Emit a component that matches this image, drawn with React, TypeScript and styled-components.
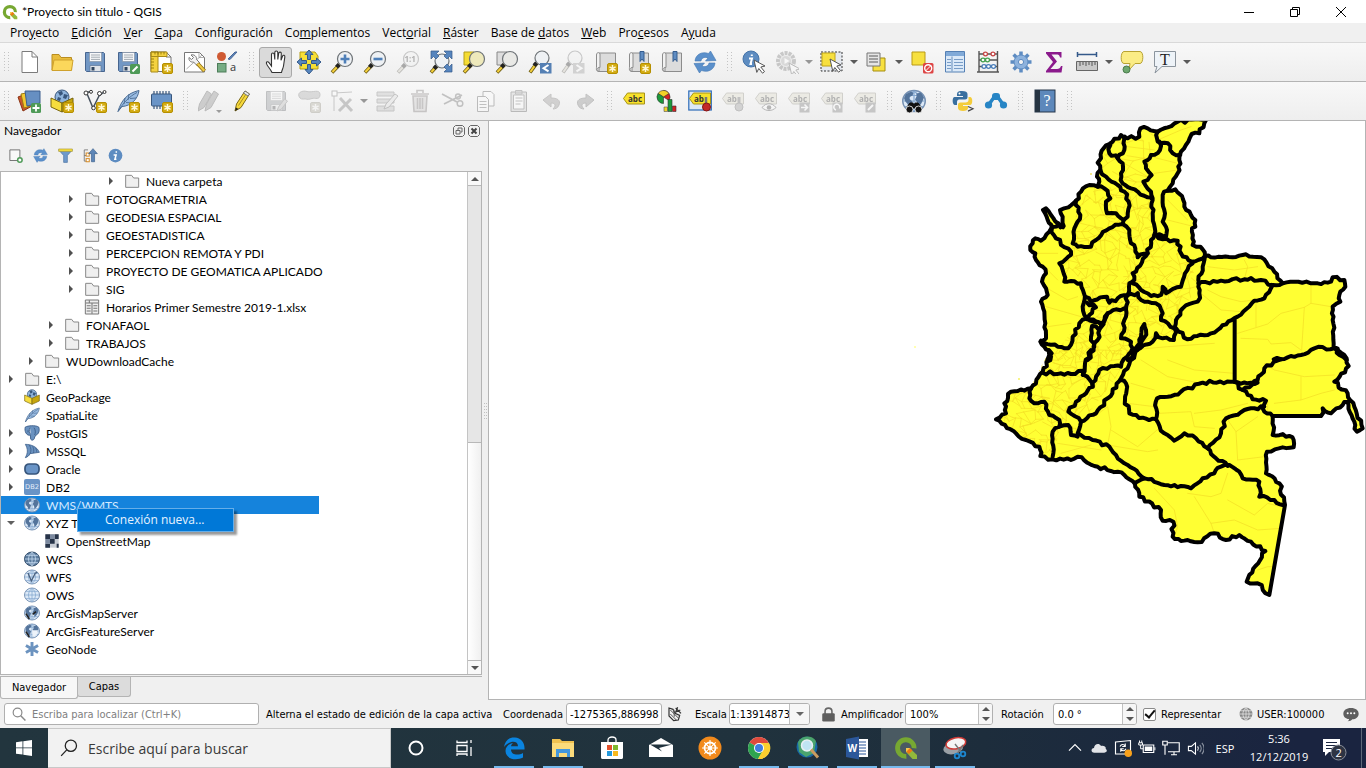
import React from "react";
import styled, { createGlobalStyle } from "styled-components";

const UI = '"Open Sans", "Noto Sans", sans-serif';
const NARROW = 'Lato, "Open Sans", sans-serif';
const COMPACT = '"DejaVu Sans Condensed", "Noto Sans", sans-serif';

const GlobalStyle = createGlobalStyle`
  * { box-sizing: border-box; }
  body { margin: 0; font-family: ${UI}; font-size: 12px; color: #000; background: #f0f0f0; overflow: hidden; }
  button, input { font: inherit; color: inherit; margin: 0; padding: 0; border: 0; background: none; outline: 0; border-radius: 0; }
  svg { display: block; flex: none; }
`;

/* ---------- icon pieces ---------- */

type IconProps = { children: React.ReactNode; size?: number; box?: number };
const Svg = ({ children, size = 24, box = 24 }: IconProps) => (
  <svg width={size} height={size} viewBox={`0 0 ${box} ${box}`} fill="none" aria-hidden="true">{children}</svg>
);

const Star = ({ x = 13, y = 13 }: { x?: number; y?: number }) => (
  <g transform={`translate(${x} ${y})`}>
    <rect x=".5" y=".5" width="10" height="10" rx="1.5" fill="#d3ab12" stroke="#b58f00" />
    <path d="M5.5 2v7M2.4 3.8l6.2 3.5M8.6 3.8L2.4 7.3" stroke="#fff8d8" strokeWidth="1.5" />
  </g>
);

const Lens = ({ cx = 15, cy = 9, r = 7.5, fill = "#eef1f4" }: { cx?: number; cy?: number; r?: number; fill?: string }) => (
  <g>
    <path d={`M2 22.5L${cx - r * 0.72} ${cy + r * 0.72}`} stroke="#6b5a10" strokeWidth="3.6" />
    <path d={`M2.4 22L${cx - r * 0.9} ${cy + r * 0.9}`} stroke="#f4d03c" strokeWidth="2" />
    <path d={`M${cx - r - 1} ${cy + r + 0.6}l2.6-2.6`} stroke="#222" strokeWidth="4" />
    <circle cx={cx} cy={cy} r={r} fill={fill} stroke="#6f7478" strokeWidth="1.2" />
  </g>
);

const Disk = () => (
  <g>
    <path d="M2.500 2.500h18l1 1v18h-18l-1-1z" fill="#7297c4" stroke="#47658f" />
    <path d="M6.500 2.500h12v9h-12z" fill="#f7f8fa" stroke="#7f8b9a" strokeWidth=".6" />
    <path d="M8 5h9M8 7.200h9M8 9.400h9" stroke="#98a1aa" strokeWidth=".9" />
    <path d="M7 15.500h11v6H7z" fill="#dfe3e8" stroke="#5d7697" strokeWidth=".7" />
    <path d="M8.500 17h3v3.500h-3z" fill="#30455f" />
  </g>
);

const Cursor = ({ x = 12, y = 10 }: { x?: number; y?: number }) => (
  <path transform={`translate(${x} ${y})`} d="M0 0l11 6-4.200 1 3.700 4.600-2 1.600-3.700-4.700-2 3.900z" fill="#fff" stroke="#555" />
);

const Tag = ({ text = "abc" }: { text?: string }) => (
  <g>
    <path d="M1.500 9.500l4-5.500h17v11h-17z" fill="#f7e12c" stroke="#a69216" />
    <text x="6" y="12.500" fontSize="8" fontWeight="700" fontFamily="Open Sans, sans-serif" fill="#333">{text}</text>
  </g>
);

const Arrows = () => (
  <path d="M2 11C2.500 4.500 9 1 15.500 3.500L17.500 1l5.500 9.500-10.500.5 2.500-3C11.500 6.500 8.500 8 8 11zM22 13c-.5 6.500-7 10-13.500 7.500L6.500 23 1 13.500l10.500-.5L9 16c3.500 1.500 6.500 0 7-3z" fill="#5b90cb" stroke="#4377b2" strokeWidth=".6" />
);

const Scroll = () => (
  <g>
    <path d="M5 3h16.500v18.500H5z" fill="#dcdcdc" stroke="#8c8c8c" />
    <path d="M5.500 21.500c-4 0-3-3-3-4.500V5c0-3 3-3 3.500-1v13.500c-1-.5-3 .5-3 2 0 1.500 1 2 2.500 2z" fill="#f2f2f2" stroke="#8c8c8c" />
  </g>
);
const Ribbon = () => <path d="M13 1.500h4v10l-2-2.500-2 2.500z" fill="#5f8cc2" stroke="#355c8e" />;

const Quill = () => (
  <g>
    <path d="M2 22.500C5 12 11 4 23 1.500 22 10 15 17 6 17.500z" fill="#9bbde3" stroke="#4b6c93" />
    <path d="M2 22.500C7 14 14 7 21 3.500M8 15l1-6M12 11l1-6M10 13.500l6 .5M14 9.500l6-.5" stroke="#4b6c93" strokeWidth=".9" />
  </g>
);

const Globe = ({ land = true, dark = false }: { land?: boolean; dark?: boolean }) => (
  <g>
    <ellipse cx="12" cy="12" rx="11.300" ry="10.500" fill={dark ? "#5c7c9e" : "#dce9f7"} stroke={dark ? "#2d4866" : "#7590b2"} strokeWidth="1.400" />
    <path d="M1 12h22M3 6.500h18M3 17.500h18M12 2v20M12 2C5 7 5 17 12 22M12 2c7 5 7 15 0 20" stroke={dark ? "#c5daf0" : "#86a9d0"} strokeWidth="1.200" />
    {land && <path d="M4 5l5-2.500 2.500 1.500-1 2.500-3 1.500v2l3 2.500-1 3.500-2.500 3-1.500-4L3 12l-1-3zM14.500 4.500l4.500-1 3 5-1.500 3.500-1.500 3-3 3-1-5-2-2.500 1.500-3z" fill="#54749b" />}
  </g>
);

const PackageShape = () => (
  <g>
    <circle cx="12" cy="8" r="7" fill="#8fb4dc" stroke="#38567c" />
    <path d="M8 3l4-1 1 3-3 2zM14 5l4 1-2 4-3-1zM8 8l3 1-1 3-3-1z" fill="#38567c" />
    <path d="M1 9l11 5v9L1 18z" fill="#f6dd3d" stroke="#77640c" />
    <path d="M23 9l-11 5v9l11-5z" fill="#c7a60e" stroke="#77640c" />
  </g>
);

const QLogo = () => (
  <g>
    <path d="M22.500 12.500A10.700 10.700 0 1 0 12.500 22.700l-.3-4.700A5.900 5.900 0 1 1 17.800 12z" fill="#77a832" />
    <path d="M12 12h3.500l7.500 7v4h-4.500L12 16z" fill="#93b93b" />
    <path d="M12 12h4l2.500 2.500-3.500 3.500-3-2.500z" fill="#ee7913" />
    <path d="M12 12h4l-4 4z" fill="#f6c94e" />
  </g>
);

const IC: Record<string, React.ReactNode> = {
  new: <><path d="M5 1.500h10l5.500 5.500v15.500H5z" fill="#fff" stroke="#7b7b7b" /><path d="M15 1.500V7h5.500" stroke="#7b7b7b" /></>,
  open: <><path d="M2 20V4.500h7l2 3h10.500V20z" fill="#e9bd3d" stroke="#b98d20" /><path d="M2 20.500L4 10h19l-1.500 10.500z" fill="#fbd75b" stroke="#cfa12c" /></>,
  save: <Disk />,
  saveAs: <><Disk /><rect x="14" y="14" width="10" height="10" rx="1.500" fill="#4e9a57" /><path d="M16.500 21.500l5-5" stroke="#fff" strokeWidth="2" /></>,
  layout: <><path d="M2 2h15l5 5v14.500H2z" fill="#fff" stroke="#777" /><path d="M17 2v5h5" stroke="#777" /><path d="M2 2h7v20H2zM2 2h16v4.500H2z" fill="#f4d240" stroke="#a98b18" /><path d="M6 2v2.500M9 2v2.500M12 2v2.500M15 2v2.500M2 9h3M2 12h3M2 15h3M2 18h3" stroke="#8b6e00" strokeWidth=".8" /><Star /></>,
  manager: <><path d="M2.500 2.500h15l5 5v14.500h-20z" fill="#fff" stroke="#777" /><path d="M4.500 19L20 5M17 2.500v5h5" stroke="#999" strokeWidth=".8" /><path d="M9 5c3-1 6 1.500 5.500 4.500l3 3-2.500 3-3.500-3.500c-3 .5-5-1.500-4.500-4.500l2.500 2 2-2z" fill="#f2f2f2" stroke="#777" /><path d="M15.500 13.500l7 7.500" stroke="#8d6b10" strokeWidth="4" /><path d="M15.800 13.800l6.500 7" stroke="#edca45" strokeWidth="2.400" /></>,
  style: <><circle cx="6.500" cy="6.500" r="4.500" fill="#cf5a33" /><path d="M13 9l7-7h2l-7 7.500z" fill="#5d83b5" stroke="#48699a" /><rect x="2.500" y="13.500" width="8.500" height="8.500" fill="#77ac84" stroke="#4d7d59" /><text x="15" y="21" fontSize="11" fontFamily="Open Sans, sans-serif" fill="#333">a</text></>,
  hand: <path d="M8 22.500C6 18 3 16 2.500 13.500c-.5-2 1.500-2.300 2.500-.8L7.500 16V4.500c0-2 2.500-2 2.800 0l.5 5V2.500c0-2 2.800-2 3 0v7l.9-6c.2-2 2.700-1.700 2.600.2l-.3 6.500 1.500-4c.7-1.600 2.700-1 2.300 1L19.500 16c-.5 2.500-1.500 4-2 6.500z" fill="#fff" stroke="#333" strokeWidth="1.100" />,
  pan: <><path d="M3 2h15l3 4v13H3z" fill="#f7df35" stroke="#b49d18" /><path d="M12 0l4 4.500h-2.500v5h-3v-5H8zM12 24l4-4.500h-2.500v-5h-3v5H8zM0 12l4.500-4v2.500h5v3h-5V16zM24 12l-4.500-4v2.500h-5v3h5V16z" fill="#5685be" stroke="#34598a" /></>,
  zoomIn: <><Lens /><path d="M15 4.500v9M10.500 9h9" stroke="#4e7fb8" strokeWidth="2.600" /></>,
  zoomOut: <><Lens /><path d="M10.500 9h9" stroke="#4e7fb8" strokeWidth="2.600" /></>,
  zoom1: <><Lens /><text x="8.500" y="12" fontSize="8" fontWeight="700" fontFamily="Open Sans, sans-serif" fill="#333">1:1</text></>,
  zoomFull: <><Lens cx={13} cy={11} r={7} /><path d="M2 1h8L7.500 3.500 10 6 7 9 4.500 6.500 2 9zM23 1v8l-2.500-2.500L18 9l-3-3 2.500-2.500L15 1zM23 22h-8l2.500-2.500L15 17l3-3 2.500 2.500L23 14z" fill="#5685be" stroke="#34598a" strokeWidth=".7" /></>,
  zoomSel: <><path d="M2 2h10v13H2z" fill="#f5dc34" stroke="#b49d18" /><Lens fill="#eee9bb" /></>,
  zoomLayer: <><path d="M2 2h10v13H2z" fill="#ddd" stroke="#888" /><Lens fill="#e9e9e6" /></>,
  zoomLast: <><Lens cx={14} cy={8} r={7} /><rect x="12" y="13" width="11.500" height="10.500" fill="#5580b4" /><path d="M20.500 15l-5 3.200 5 3.200" stroke="#fff" strokeWidth="2" /></>,
  zoomNext: <><Lens cx={14} cy={8} r={7} /><rect x="12" y="13" width="11.500" height="10.500" fill="#999" /><path d="M15.500 15l5 3.200-5 3.200" stroke="#fff" strokeWidth="2" /></>,
  bookmark: <><Scroll /><Star /></>,
  bookmarkNew: <><Scroll /><Ribbon /><Star /></>,
  bookmarks: <><Scroll /><Ribbon /></>,
  refresh: <Arrows />,
  info: <><circle cx="9" cy="9" r="8" fill="#5d8cc1" stroke="#4473a8" /><path d="M7 8.500h3L8.500 14H10M9.800 4.500v1.500" stroke="#fff" strokeWidth="2" /><Cursor x={12} y={10} /></>,
  action: <><circle cx="11" cy="11" r="8" stroke="#777" strokeWidth="4" strokeDasharray="3 1" fill="#ddd" /><circle cx="11" cy="11" r="5" fill="#aaa" /><path d="M9.500 8l5 3-5 3z" fill="#fff" /><Cursor x={14} y={13} /></>,
  select: <><rect x="1" y="2" width="21" height="19" fill="#e5e9ef" stroke="#333" strokeDasharray="2 1.500" /><path d="M2 3h13v13H2z" fill="#f7e040" stroke="#c0a51b" /><Cursor x={10} y={9} /></>,
  selectForm: <><path d="M8 8h12v13H8z" fill="#f7e040" stroke="#a58d10" /><path d="M2 3h13v13H2z" fill="#e5e5e5" stroke="#777" /><path d="M4 6h9M4 9h9M4 12h9" stroke="#888" strokeWidth="1.600" /></>,
  deselect: <><path d="M2 2h13v13H2z" fill="#f7e040" stroke="#b99a14" /><rect x="13" y="13" width="10.500" height="10.500" rx="1.500" fill="#d44" /><circle cx="18.200" cy="18.200" r="3.500" stroke="#fff" strokeWidth="1.400" /><path d="M15.500 21l5.500-5.500" stroke="#fff" /></>,
  table: <><path d="M2.500 1.500h19v20.500h-19z" fill="#dbe9f8" stroke="#5580b4" /><path d="M3 2h18v4H3z" fill="#81aad8" /><path d="M9 6.500v15M4 9.500h4M4 12.500h4M4 15.500h4M4 18.500h4M11 9.500h9M11 12.500h9M11 15.500h9M11 18.500h9" stroke="#799dc7" strokeWidth="1.200" /></>,
  abacus: <><path d="M3 1v21M21.500 1v21M1 22h22M3 4h18M3 10h18M3 16.500h18" stroke="#555" strokeWidth="1.400" /><path d="M7.500 4a2 1.800 0 1 0 4 0 2 1.800 0 1 0-4 0M15 4a2 1.800 0 1 0 4 0 2 1.800 0 1 0-4 0" fill="#fff" stroke="#c64545" strokeWidth="1.300" /><path d="M5 10a2 1.800 0 1 0 4 0 2 1.800 0 1 0-4 0M9.500 10a2 1.800 0 1 0 4 0 2 1.800 0 1 0-4 0" fill="#fff" stroke="#46a050" strokeWidth="1.300" /><path d="M6 16.500a2 1.800 0 1 0 4 0 2 1.800 0 1 0-4 0M10.500 16.500a2 1.800 0 1 0 4 0 2 1.800 0 1 0-4 0M15.500 16.500a2 1.800 0 1 0 4 0 2 1.800 0 1 0-4 0" fill="#fff" stroke="#4a7db8" strokeWidth="1.300" /></>,
  gear: <><path d="M12 1.500v21M1.500 12h21M4.600 4.600l14.800 14.800M19.400 4.600L4.600 19.400" stroke="#5e8cc2" strokeWidth="3.500" /><circle cx="12" cy="12" r="7" fill="#8db2dd" stroke="#5e8cc2" /><circle cx="12" cy="12" r="2.600" fill="#f4f4f4" stroke="#5e8cc2" /></>,
  sigma: <path d="M4 2h15.500v5.500h-1.500C17.500 5 16.500 4.500 14 4.500H9.500l5.500 7-6.500 7.500H15c2 0 3.500-1 4-3h1.500L19.500 22.500H4v-1.500l7-9L4 3.500z" fill="#8b1a8c" />,
  measure: <><path d="M2 4.500h20M2.500 2v5M21.500 2v5" stroke="#34598a" strokeWidth="1.500" /><path d="M1.500 11.500h21v9h-21z" fill="#c9c9c9" stroke="#666" /><path d="M5 12v4M8 12v3M11 12v4M14 12v3M17 12v4M20 12v3" stroke="#555" /></>,
  tips: <><path d="M4 1.500h16c4 0 3.500 12 0 12h-5L9 20l1-6.500H4c-4 0-3.500-12 0-12z" fill="#fbec85" stroke="#b8a232" /><circle cx="6.500" cy="19.500" r="3.500" fill="#6ea86f" stroke="#4a7b4c" /></>,
  note: <><path d="M1.500 1.500h21v15H9l-7 6.500 2-6.500H1.500z" fill="#eef3f8" stroke="#8b949d" /><text x="7" y="14.500" fontSize="16" fontFamily="Liberation Serif, serif" fill="#222">T</text></>,

  dataSrc: <><path d="M1 8l10-4 4 13-9 5z" fill="#c9552e" stroke="#8b3515" /><path d="M4 5l10-2 3 13-10 3z" fill="#f2c832" stroke="#9d7a10" /><path d="M8 2h15v12l-13 3z" fill="#668fc2" stroke="#3c5f8e" /><rect x="14" y="14" width="10" height="10" rx="1.500" fill="#4e9a57" /><path d="M19 15.500v7M15.500 19h7" stroke="#fff" strokeWidth="1.800" /></>,
  geopackage: <><PackageShape /><Star /></>,
  vector: <><path d="M3.500 3.500L10 19l6-12 5-4M3.500 3.500L8 2.500" stroke="#46515e" strokeWidth="1.500" /><circle cx="3" cy="4" r="2" fill="#fff" stroke="#333" /><circle cx="8" cy="2.800" r="1.500" fill="#fff" stroke="#333" /><circle cx="16.500" cy="4.500" r="2" fill="#fff" stroke="#333" /><circle cx="21.500" cy="3" r="1.500" fill="#fff" stroke="#333" /><circle cx="10.500" cy="19" r="1.800" fill="#fff" stroke="#333" /><Star /></>,
  quill: <><Quill /><Star /></>,
  memory: <><path d="M5 2v18M8 2v18M11 2v18M14 2v18M17 2v18M20 2v18" stroke="#38567c" strokeWidth="1.200" /><rect x="2.500" y="5" width="20" height="12" rx="1" fill="#6a94c6" stroke="#38567c" /><Star /></>,
  pencils: <><path d="M0 22l1.500-7L9 2l4.500 3L6 18.500z" fill="#888" stroke="#555" /><path d="M7 22l1.500-7L16 2l4.500 3L13 18.500z" fill="#888" stroke="#555" /><path d="M18 21h6l-3 3z" fill="#000" /></>,
  pencil: <><path d="M4 22l1.500-7L14 2l4.500 3L10 18.500z" fill="#f7d93b" stroke="#7c6815" /><path d="M7.500 16.500l8.500-13" stroke="#a88f21" /><path d="M14 2l4.500 3-1.500 2-4.500-3z" fill="#eee" stroke="#777" /><path d="M4 22l1-3.500 2.500 1.500z" fill="#222" /></>,
  saveEdits: <><Disk /><path d="M13 22l1.500-4 6-8 3 2-6 8z" fill="#bbb" stroke="#777" /></>,
  blob: <><path d="M3 9C-1 4 5 1 10 2.500s13-3 13 3c0 6-5 3-8 4s-5 1-6 .5-4 1-6-1z" fill="#aaa" stroke="#777" /><Star /></>,
  vertex: <><path d="M4 22V4L22 3" stroke="#777" /><rect x="2" y="2" width="5" height="5" fill="#fff" stroke="#666" /><path d="M10 9l12 13M21 10L9 22" stroke="#777" strokeWidth="3" /></>,
  modify: <><path d="M2 3h17v4H2zM2 10h17v4H2zM2 17h17v5H2z" fill="#bbb" stroke="#777" /><path d="M9 20l2-5 9-10 3 2-9 11z" fill="#ddd" stroke="#666" /></>,
  trash: <><path d="M5 7h14l-1 15.500H6z" fill="#d9c4c4" stroke="#9d6c6c" strokeWidth="1.600" /><path d="M3 5h18M9 4V1.500h6V4M9.500 9v11M12 9v11M14.500 9v11" stroke="#9d6c6c" strokeWidth="1.600" /></>,
  cut: <><path d="M1 5l15 8M3 15l18-9" stroke="#666" strokeWidth="1.800" /><circle cx="19" cy="14.500" r="2.800" stroke="#666" strokeWidth="1.500" /><circle cx="17" cy="7.500" r="2.400" stroke="#666" strokeWidth="1.500" /></>,
  copy: <><path d="M9 2.500h8l3 3V17H9z" fill="#fff" stroke="#555" /><path d="M3.500 7.500h8l3 3v12h-11z" fill="#fff" stroke="#555" /><path d="M5.500 12.500h7M5.500 15.500h7M5.500 18.500h7" stroke="#666" /></>,
  paste: <><path d="M4 3h15.500v19.500H4z" fill="#ccc" stroke="#555" /><path d="M6.500 6H17v14H6.500z" fill="#fff" stroke="#666" /><path d="M8.500 1.500h6.500V5H8.500zM8.500 9h7M8.500 12h7M8.500 15h5" stroke="#666" /></>,
  undo: <path d="M3 11l8-6v4c6 0 10 2 8 7-1 3-4 4-6 4 3-3 3-6-2-6v4z" fill="#a58f80" stroke="#7d6d62" />,
  redo: <path d="M21 11l-8-6v4c-6 0-10 2-8 7 1 3 4 4 6 4-3-3-3-6 2-6v4z" fill="#888" stroke="#666" />,
  label: <Tag />,
  diagram: <><path d="M8.500 8V1.500A6.500 6.500 0 0 1 14 11.500z" fill="#d32222" stroke="#333" strokeWidth=".6" /><path d="M8.500 8L3 4.500A6.500 6.500 0 0 1 14 4.500z" fill="#f2d228" stroke="#333" strokeWidth=".6" /><path d="M8.500 8L3 4.500a6.500 6.500 0 0 0 5.500 10z" fill="#1c9b3c" stroke="#333" strokeWidth=".6" /><path d="M9 18h3.500v4.500H9z" fill="#f2d228" stroke="#555" strokeWidth=".6" /><path d="M13 10.500h4v12h-4z" fill="#1c9b3c" stroke="#333" strokeWidth=".6" /><path d="M17.500 17h3.500v5.500h-3.500z" fill="#d32222" stroke="#333" strokeWidth=".6" /></>,
  pinLabels: <><rect x=".8" y="2" width="22.500" height="19" fill="#dde8f6" stroke="#2d6cb8" strokeWidth="1.200" /><Tag text="ab" /><path d="M18 8v8" stroke="#777" strokeWidth="2.500" /><circle cx="18.500" cy="18" r="4" fill="#c22828" stroke="#851616" /></>,
  labelPin: <><Tag text="ab" /><path d="M18 8v8" stroke="#666" strokeWidth="3" /><circle cx="18" cy="18" r="4" fill="#999" stroke="#666" /></>,
  labelShow: <><Tag /><path d="M8 18.500c4-5 10-5 14 0-4 4-10 4-14 0z" fill="#fff" stroke="#444" /><circle cx="15" cy="18.500" r="2.300" fill="#444" /></>,
  labelMove: <><Tag /><rect x="12.500" y="13.500" width="10" height="10" fill="#777" /><path d="M14 18.500h6M17.500 15.500l3 3-3 3" stroke="#fff" strokeWidth="1.600" /></>,
  labelRotate: <><Tag /><rect x="12.500" y="13.500" width="10" height="10" fill="#777" /><path d="M16 21a3 3 0 1 1 3.500-1.500" stroke="#fff" strokeWidth="1.600" /></>,
  labelEdit: <><Tag /><rect x="12.500" y="13.500" width="10" height="10" fill="#777" /><path d="M15 21l5-5" stroke="#fff" strokeWidth="2" /></>,
  metasearch: <><Globe /><path d="M5 22v-4l3-4h3l1 3 1-3h3l3 4v4h-5v-3h-4v3z" fill="#111" stroke="#111" /><circle cx="7.500" cy="20.500" r="3.500" fill="#111" stroke="#fff" strokeWidth=".8" /><circle cx="16.500" cy="20.500" r="3.500" fill="#111" stroke="#fff" strokeWidth=".8" /></>,
  python: <><path d="M11 2C6 2 6 3.500 6 7h6v1H3.500C1 8 1 16 4 16h2v-3c0-2 1.500-2.500 3-2.500h5c2 0 2.500-1 2.500-2.500V5c0-2-2-3-5.500-3z" fill="#396f9f" /><path d="M17.500 8v3c0 1.500-1 2.500-3 2.500h-5C7.500 13.500 7 14.500 7 16v3c0 2 2 3 5 3s5-1 5-3v-2h-5v-1h7c3 0 3-8 0-8z" fill="#f4cc3a" /><circle cx="8.500" cy="4.500" r="1" fill="#fff" /><path d="M17 17.500l5 2.300-5 2.300" stroke="#444" strokeWidth="1.200" /></>,
  grass: <><path d="M4.500 16l5-7h5l5 7" stroke="#2785c5" strokeWidth="3.500" /><rect x="8" y="4" width="8" height="7" rx="3" fill="#2785c5" /><circle cx="4.500" cy="16" r="3.600" fill="#2785c5" /><circle cx="19.500" cy="16" r="3.600" fill="#2785c5" /></>,
  help: <><rect x="2" y="1" width="20" height="22" fill="#5d88bb" stroke="#26364a" /><rect x="2" y="1" width="5" height="22" fill="#263442" /><text x="10.500" y="17" fontSize="16" fontFamily="Liberation Serif, serif" fill="#fff">?</text></>,

  addLayer: <><path d="M3 3h16v17H3z" fill="#f8f8f8" stroke="#666" strokeWidth="1.400" /><circle cx="19" cy="19" r="3.600" fill="#fff" stroke="#4e9a57" strokeWidth="2.400" /></>,
  filter: <><path d="M1 3h22l-8 9v11h-6V12z" fill="#6f9acb" stroke="#466f9f" /><path d="M1 1.500h22v4H1z" fill="#f4dc3c" stroke="#9c8b2a" strokeWidth=".8" /></>,
  collapse: <><path d="M2 3h6M2 3v18h6M2 12h5" stroke="#777" strokeWidth="1.400" /><rect x="5" y="8" width="5" height="5" fill="#fff" stroke="#d58a24" strokeWidth="1.600" /><rect x="5" y="17" width="5" height="5" fill="#fff" stroke="#d58a24" strokeWidth="1.600" /><path d="M16 1l7 8h-4.500v13h-5V9H9z" fill="#5d86b8" stroke="#355a86" /></>,
  infoOnly: <><circle cx="12" cy="12" r="11" fill="#5d8cc1" /><path d="M9 11h4l-2 7h2.500M13.300 5v2.500" stroke="#fff" strokeWidth="2.400" /></>,

  folder: <path d="M2.500 21.500v-18h9l3 4h7.500v14z" fill="#efefef" stroke="#898989" strokeWidth="1.500" />,
  sheet: <><path d="M2 1.500h20v21H2z" fill="#efefef" stroke="#777" strokeWidth="1.500" /><path d="M3 6h18M12 6v16M4 10h6M4 14h6M4 18h6M14 10h6M14 14h6M14 18h6M8 2v4" stroke="#777" strokeWidth="1.600" /></>,
  pkg: <PackageShape />,
  feather: <Quill />,
  postgis: <path d="M2 3c4-2 15-3 20 0 2 5 0 11-4 12l-2 3c0 5-5 6-6 3l-.5-6C4 17 0 9 2 3zM9 4c-2 4-1 8 1 10M15 4c3 4 2 9 1 11M6 8v3" fill="#6a92c0" stroke="#3d5f8a" strokeWidth="1.400" />,
  mssql: <path d="M2 2c9 0 18 4 21 12L9 16c-1 3-4 5-7 6 4-7 4-13 0-20zM8 3c3 5 3 9 1 13M13 5c2 4 2 7 1 10M17 7c2 3 2 5 2 7" fill="#6a92c0" stroke="#3d5f8a" strokeWidth="1.200" />,
  oracle: <rect x="1.500" y="4.500" width="21" height="15" rx="6" fill="#6a94c6" stroke="#38567c" strokeWidth="2.600" />,
  db2: <><rect x="0" y="0" width="24" height="24" rx="3" fill="#6a94c6" /><text x="1.500" y="15.500" fontSize="10" fontFamily="DejaVu Sans, sans-serif" fill="#e4eefa">DB2</text></>,
  wms: <Globe />,
  osm: <><rect x="2" y="2" width="20" height="20" fill="#c9ced6" /><path d="M2 2h7v7H2zM16 2h6v7h-6zM9 9h7v7H9zM2 16h7v6H2zM19 16h3v6h-3z" fill="#273449" /><path d="M9 2h7v7H9zM2 9h7v7H2z" fill="#7c8aa0" /></>,
  wcs: <Globe land={false} dark />,
  wfs: <><Globe land={false} /><path d="M6 6l5 12 6-12 3-1" stroke="#4a617f" strokeWidth="2" /></>,
  ows: <Globe land={false} />,
  arc: <><Globe /><path d="M3 13l5 8M13 14l5-4" stroke="#222" strokeWidth="2.500" /></>,
  arcf: <><Globe /><path d="M12 11h9l-2 7-6 3z" fill="#edf3fa" /><path d="M3 13l5 8" stroke="#222" strokeWidth="2.500" /></>,
  geonode: <path d="M12 1.500v21M2.900 6.800l18.200 10.500M21.100 6.800L2.900 17.300" stroke="#6c93bf" strokeWidth="4.400" />,
};

/* ---------- window frame ---------- */

const Window = styled.div`display: flex; flex-direction: column; height: 100vh; overflow: hidden;`;

const TitleBar = styled.header`
  display: flex; align-items: center; height: 23px; flex: none; background: #fff; padding: 0 2px;
  h1 { margin: 0 auto 0 4px; font: 400 12px/22px ${NARROW}; }
`;
const WindowButton = styled.button`
  width: 46px; height: 22px; display: grid; place-items: center;
`;

const MenuBar = styled.nav`
  display: flex; align-items: center; flex: none; height: 20px; padding-left: 4px; background: #f0f0f0; border-bottom: 1px solid #d9d9d9;
`;
const MenuItem = styled.button`
  padding: 0 6px; line-height: 19px; white-space: nowrap;
  u { text-underline-offset: 1px; }
`;

const ToolBar = styled.div`
  display: flex; align-items: center; flex: none; height: 39px;
  background: linear-gradient(#f8f8f8, #eeeeee); border-bottom: 1px solid #b4b4b4;
`;
const Handle = styled.span<{ $first?: boolean }>`
  width: ${(p) => (p.$first ? 12 : 16)}px; height: 20px; flex: none; display: flex; justify-content: center;
  &::before { content: ""; width: 5px; height: 19px;
    background: linear-gradient(#c4c4c4, #c4c4c4) 0 0 / 1px 100% no-repeat, linear-gradient(#c4c4c4, #c4c4c4) 100% 0 / 1px 100% no-repeat;
    mask: repeating-linear-gradient(#000 0 1px, transparent 1px 3px); }
`;
const ToolButton = styled.button<{ $active?: boolean }>`
  width: 33px; height: 31px; flex: none; display: grid; place-items: center; border-radius: 3px;
  border: 1px solid ${(p) => (p.$active ? "#a9a9a9" : "transparent")};
  background: ${(p) => (p.$active ? "#dadada" : "none")};
  &:disabled svg { filter: grayscale(0.9); opacity: 0.35; }
`;
const DropArrow = styled.button`
  width: 12px; height: 24px; flex: none; display: grid; place-items: center;
  &::before { content: ""; border: 4px solid transparent; border-top-color: #5a5a5a; border-bottom: 0; }
  &:disabled::before { opacity: 0.6; }
`;

/* ---------- browser panel ---------- */

const Workspace = styled.main`display: flex; flex: 1; min-height: 0;`;

const Dock = styled.aside`display: flex; flex-direction: column; width: 482px; flex: none;`;
const DockTitle = styled.div`
  display: flex; align-items: center; height: 19px; padding: 0 2px 0 4px; gap: 3px;
  h2 { margin: 0 auto 0 0; font-size: 12px; font-weight: 400; font-family: ${NARROW}; }
`;
const DockButton = styled.button`width: 12px; height: 12px; display: grid; place-items: center;`;
const DockTools = styled.div`display: flex; align-items: center; height: 31px; padding-left: 3px;`;
const DockTool = styled.button`width: 25px; height: 24px; display: grid; place-items: center;`;

const TreeFrame = styled.div`
  display: flex; flex: 1; min-height: 0; background: #fff; border: 1px solid #b4b4b4;
`;
const Tree = styled.ul`flex: 1; margin: 0; padding: 0; list-style: none; position: relative; font-family: ${NARROW};`;
const TreeRow = styled.li<{ $level: number; $selected?: boolean }>`
  display: flex; align-items: center; height: 18px; padding-left: ${(p) => p.$level * 20}px;
  position: relative; line-height: 18px; white-space: nowrap;
  ${(p) => p.$selected && "width: 318px; background: #1583dc; color: #d5eaff; z-index: 1;"}
`;
const Expander = styled.span<{ $state?: "closed" | "open" }>`
  width: 20px; flex: none; display: grid; place-items: center; margin-right: 3px;
  &::before {
    content: ""; border: 4px solid transparent; border-width: ${(p) => (p.$state === "open" ? "4px 4px 0" : "4px 0 4px 4px")};
    border-color: ${(p) => (p.$state === "open" ? "#606060 transparent" : p.$state ? "transparent transparent transparent #505050" : "transparent")};
  }
`;
const RowText = styled.span`margin-left: 6px; padding-top: 1px;`;

const ContextMenu = styled.div`
  position: absolute; left: 76px; top: 12px; width: 157px; height: 24px; background: #0078d7;
  border: 1px solid #66aee9; box-shadow: 3px 3px 2px rgba(0, 0, 0, 0.4);
  button { width: 100%; height: 22px; padding-left: 27px; text-align: left; color: #e6f3ff; font-family: ${UI}; line-height: 22px; }
`;

const ScrollBar = styled.div`
  display: flex; flex-direction: column; width: 14px; border-left: 1px solid #c4c4c4; background: #e6e6e6;
`;
const ScrollStep = styled.button<{ $down?: boolean }>`
  height: 14px; flex: none; display: grid; place-items: center; background: #f9f9f9;
  border: 0 solid #b8b8b8; border-width: ${(p) => (p.$down ? "1px 0 0" : "0 0 1px")};
  &::before { content: ""; border: 4px solid transparent;
    ${(p) => (p.$down ? "border-top-color: #555; border-bottom: 0;" : "border-bottom-color: #555; border-top: 0;")} }
`;
const ScrollTrack = styled.div`flex: 257;`;
const ScrollThumb = styled.div`flex: 217; background: linear-gradient(90deg, #fff, #f0f0f0); border-top: 1px solid #b8b8b8;`;

const Tabs = styled.div`
  display: flex; align-items: flex-start; height: 24px; flex: none; margin-top: 1px; border-top: 1px solid #b4b4b4;
`;
const Tab = styled.button<{ $active?: boolean }>`
  padding: 0 9px; height: ${(p) => (p.$active ? 22 : 20)}px; font: 11px ${COMPACT};
  min-width: ${(p) => (p.$active ? 78 : 54)}px;
  background: ${(p) => (p.$active ? "#f7f7f7" : "#dcdcdc")}; border: 1px solid #b4b4b4; border-top-width: 0;
  border-radius: 0 0 3px 3px; margin-left: ${(p) => (p.$active ? 0 : -1)}px;
`;

const Splitter = styled.div`
  width: 6px; flex: none; display: flex; align-items: center; justify-content: center;
  &::before { content: ""; width: 3px; height: 16px;
    background: linear-gradient(90deg, #c0c0c0 1px, transparent 1px 2px, #c0c0c0 2px);
    mask: repeating-linear-gradient(#000 0 1px, transparent 1px 3px); }
`;
const MapCanvas = styled.section`
  flex: 1; min-width: 0; background: #fff; border: solid #b4b4b4; border-width: 0 1px 1px;
  svg { width: 100%; height: 100%; }
`;

/* ---------- status bar ---------- */

const StatusBar = styled.footer`
  display: flex; align-items: center; height: 28px; flex: none; padding: 0 7px 0 4px; font: 11px ${COMPACT}; white-space: nowrap;
  svg { color: #555; }
`;
const boxed = `height: 22px; border: 1px solid #b0b0b0; border-radius: 3px; background: #fff;`;
const Locator = styled.label`
  ${boxed} display: flex; align-items: center; width: 255px; gap: 6px; padding-left: 7px; flex: none;
  input { flex: 1; min-width: 0; }
  input::placeholder { color: #808080; opacity: 1; }
`;
const Message = styled.output`flex: 1; min-width: 0; overflow: hidden; padding-left: 7px;`;
const StatusLabel = styled.label<{ $w: number }>`width: ${(p) => p.$w}px; flex: none;`;
const Field = styled.div<{ $w: number; $gap?: number; $pad?: number }>`
  ${boxed} display: flex; width: ${(p) => p.$w}px; margin-right: ${(p) => p.$gap ?? 8}px; flex: none; overflow: hidden;
  input { flex: 1; min-width: 0; padding-left: ${(p) => p.$pad ?? 4}px; }
`;
const ComboButton = styled.button`
  width: 20px; border-left: 1px solid #c0c0c0; background: #f6f6f6; display: grid; place-items: center;
  &::before { content: ""; border: 4px solid transparent; border-top-color: #666; border-bottom: 0; }
`;
const Spinner = styled.div`
  width: 14px; display: grid; grid-template-rows: 1fr 1fr; border-left: 1px solid #c0c0c0; background: #f6f6f6;
  button { display: grid; place-items: center; }
  button::before { content: ""; border: 4px solid transparent; }
  button:first-child::before { border-bottom-color: #555; border-top: 0; }
  button:last-child::before { border-top-color: #555; border-bottom: 0; }
`;
const IconButton = styled.button<{ $w: number }>`width: ${(p) => p.$w}px; height: 20px; flex: none; display: flex; align-items: center;`;
const Check = styled.label`
  display: flex; align-items: center; gap: 5px; width: 96px; flex: none;
  input { appearance: none; width: 13px; height: 13px; border: 1px solid #8a8a8a; border-radius: 2px; background: #fff; display: grid; place-items: center; }
  input:checked::before { content: ""; width: 4px; height: 8px; border: solid #111; border-width: 0 2px 2px 0; transform: rotate(40deg); margin-top: -2px; }
`;
const Crs = styled.button`display: flex; align-items: center; gap: 4px; width: 104px; flex: none;`;

/* ---------- taskbar ---------- */

const TaskBar = styled.footer`
  display: flex; height: 40px; flex: none; color: #fff;
  background: linear-gradient(90deg, #22353e, #20323d 55%, #1d2d3c 72%, #1a2440 95%);
`;
const StartButton = styled.button`width: 48px; display: grid; place-items: center;`;
const TaskSearch = styled.label`
  display: flex; align-items: center; width: 343px; gap: 10px; padding-left: 12px; background: #f2f2f2; color: #222; border: 1px solid #c8c8c8; border-left: 0; flex: none;
  input { flex: 1; min-width: 0; font-size: 14px; }
  input::placeholder { color: #3a3a3a; opacity: 1; }
`;
const TaskButton = styled.button<{ $running?: boolean; $active?: boolean }>`
  width: 49px; flex: none; display: grid; place-items: center; position: relative;
  background: ${(p) => (p.$active ? "#4a5a62" : "none")};
  &::after { content: ""; position: absolute; bottom: 0; left: ${(p) => (p.$active ? 0 : 5)}px; right: ${(p) => (p.$active ? 0 : 4)}px; height: 2px;
    background: ${(p) => (p.$running ? "#76b9ed" : "none")}; }
`;
const Tray = styled.div`display: flex; align-items: center; margin-left: auto; flex: none;`;
const TrayButton = styled.button`width: 24px; height: 40px; display: grid; place-items: center;`;
const Language = styled.button`width: 36px; font-size: 11px;`;
const Clock = styled.time`width: 72px; text-align: center; font-size: 11px; line-height: 18px;`;
const Notices = styled.button`width: 38px; height: 40px; margin-right: 8px; display: grid; place-items: center;`;
const ShowDesktop = styled.button`width: 5px; height: 40px; border-left: 1px solid #5d6878;`;

/* ---------- map drawing ---------- */

type Pt = [number, number];

const parse = (s: string): Pt[] => s.trim().split(/\s+/).map((p) => p.split(",").map(Number) as Pt);

const noise = (n: number) => {
  const v = Math.sin(n * 127.1 + 311.7) * 43758.5453;
  return v - Math.floor(v);
};

// Breaks each short segment into wavering steps; long segments stay ruler-straight.
const coast = (s: string) => {
  const pts = parse(s);
  let d = `M${pts[0]}`;
  for (let i = 1; i < pts.length; i++) {
    const [ax, ay] = pts[i - 1];
    const [bx, by] = pts[i];
    const len = Math.hypot(bx - ax, by - ay);
    const steps = len > 120 ? 1 : Math.max(1, Math.round(len / 11));
    for (let k = 1; k < steps; k++) {
      const j = (noise(ax + by * 3 + k) - 0.5) * 10;
      d += `L${(ax + ((bx - ax) * k) / steps - ((by - ay) / len) * j).toFixed(1)},${(ay + ((by - ay) * k) / steps + ((bx - ax) / len) * j).toFixed(1)}`;
    }
    d += `L${bx},${by}`;
  }
  return d;
};

// Irregular mesh standing for the small municipal limits.
const mesh = (x0: number, y0: number, x1: number, y1: number, step: number) => {
  const at = (i: number, j: number) =>
    `${(x0 + (i + (j % 2) / 2) * step + (noise(i * 7 + j * 13) - 0.5) * step * 1.3).toFixed(0)},${(y0 + j * step + (noise(i * 5 + j * 29 + 4) - 0.5) * step * 1.3).toFixed(0)}`;
  let d = "";
  for (let i = 0; i * step < x1 - x0; i++)
    for (let j = 0; j * step < y1 - y0; j++) {
      if (noise(i * 3 + j * 17) > 0.25) d += `M${at(i, j)}L${at(i + 1, j)}`;
      if (noise(i * 11 + j * 2) > 0.25) d += `M${at(i, j)}L${at(i, j + 1)}`;
    }
  return d;
};

const NORTH =
  "199,720 212,700 195,688 178,665 195,655 193,610 190,575 180,545 200,525 195,505 183,485 195,460 185,440 165,420 163,400 148,390 155,370 163,355 180,362 205,335 212,325 200,300 186,270 195,265 210,285 238,322 248,318 245,290 237,270 262,262 285,242 300,215 325,195 350,200 355,185 348,170 358,150 350,128 360,115 362,92 385,72 420,45 440,55 475,50 478,25 500,25 530,35 560,22 590,5 675,0 655,40 632,42 622,65 600,95 595,120 590,160 575,190 560,212 583,208 603,228 610,260 630,285 643,300 643,320 633,325 635,375 658,380 672,408 690,412 755,412 795,403 850,418 880,455 905,490 940,485 1000,490 1050,485 1055,472 1090,480 1093,500 1078,515 1078,545 1055,560 1055,600 1058,670 1075,705 1097,720";
const SOUTH =
  "1070,0 1097,25 1103,48 1060,95 1100,130 1120,170 1145,235 1128,245 1120,215 1100,155 1085,165 1050,190 1025,175 1020,198 875,198 875,255 925,258 938,270 938,292 905,292 858,305 855,370 895,400 912,465 865,735 830,700 797,695 853,603 810,575 775,555 735,570 700,550 650,577 620,570 600,573 575,560 577,515 545,512 540,480 475,440 462,400 410,365 340,348 290,320 270,330 215,328 178,318 175,290 135,270 105,250 45,208 75,190 70,160 90,125 150,115 185,65 210,20 203,0";

const NORTH_BORDERS = [
  "530,35 530,65 550,68 568,78 575,100 598,105",
  "535,65 537,90 510,105 490,125 495,145 512,165 500,180 487,185 510,215 515,235",
  "432,50 430,90 410,115 385,100 388,75",
  "410,115 425,130 420,160 425,190 450,205 500,232 515,240 515,280 520,345",
  "358,150 375,170 410,195 430,215 443,245 440,290 428,300",
  "350,200 370,205 388,235 375,245 378,280 405,280 428,300 425,312",
  "285,242 298,285 280,325 275,370 290,380 330,380 345,360 385,325 425,312 445,330 450,370 463,385 470,412 500,400 510,360 520,345",
  "560,212 545,225 552,280 545,305 558,330 555,350 525,345 545,358 590,362 600,400 632,425 672,408",
  "212,325 225,355 270,395 262,410 235,430 245,450 250,485 300,490 312,530 330,545 378,530 385,548 410,535 440,525 470,520",
  "500,400 455,460 460,480 445,490 440,525 430,600 420,655 450,665 455,715",
  "455,490 480,510 510,528 540,525 545,500 555,520 600,500 612,460 635,430",
  "672,408 665,440 652,480 655,520 650,545 605,565 585,600 578,660",
  "470,520 480,540 525,550 545,580 540,600 580,625",
  "652,490 720,482 790,478 840,480 875,495 905,490",
  "875,495 850,535 820,542 770,590 690,640 620,658 585,625",
  "878,718 920,712 960,705 1000,685 1060,685 1072,695",
  "312,530 305,560 318,595 360,612 380,580 405,568 430,565",
  "318,595 295,610 275,650 262,685 230,680 180,662",
  "380,580 365,610 350,660 320,720",
  "318,548 345,562 325,585 318,598 345,605 368,612 352,628 333,618 330,650 340,680",
  "440,720 470,690 480,650 482,625 490,612 495,630 488,655 470,680 455,705",
  "470,688 515,665 525,640 545,655 578,660",
  "208,330 232,310 246,322",
];
const SOUTH_BORDERS = [
  "150,115 145,145 160,160 190,155 205,195 235,210 235,230 215,245 215,320",
  "185,68 240,70 270,72 305,62 335,110 315,130 285,155 262,185 300,215 290,250 335,270 385,290 405,315 430,340 490,385 460,400",
  "235,230 262,225 270,255 290,260",
  "305,75 312,40 330,0",
  "465,0 440,55 420,85 380,145 345,190 300,215",
  "335,110 355,60 400,48 420,50 445,10",
  "420,90 435,100 432,150 445,190 485,203 525,208 550,250 580,272 610,250 645,265 680,295 705,325 740,348",
  "525,208 528,145 560,140 600,125 665,98 760,95 800,100 830,98",
  "680,295 720,250 735,205 790,180 850,170",
  "760,95 785,120 815,148 855,152 845,175 850,185 875,198",
  "785,120 830,90 850,55 878,36 900,28",
  "490,385 550,405 600,408 630,415 665,385 700,370 720,350 745,345 775,365 785,385 835,395 835,440 880,450 905,465",
];
const NORTH_FAINT =
  "M680,510L720,530 780,545 820,540M790,420L800,440 790,478M990,490V550L970,562 962,690M770,640L860,612 900,580 970,562M780,655L860,658 870,672 930,668 960,690M825,545V620M660,520L720,570 780,575M680,440L760,450 830,440M990,550L1050,560M530,60L600,30 630,20M510,110L590,130M520,160L590,150M440,80L520,90M430,130L500,170M440,210L470,300M560,240L620,300M560,300L640,320M190,500L260,540 290,530M195,560L300,590M200,620L270,610M165,400L230,400M190,440L230,480M450,690L560,680 700,670";
const SOUTH_FAINT =
  "M480,30L560,80 660,100M560,30L640,60 760,70M535,190L630,185 640,230 700,235M640,190L720,180 800,160M740,210L765,245 770,330M765,245L830,200M770,330L850,320M520,415L580,480 590,530 580,560M620,430L690,440 720,430 740,370M640,440L690,520 700,550M690,520L760,510 830,540 900,535M740,450L820,495 860,460 900,470M830,660L860,650 880,650M850,40L880,60 970,80 1060,75M960,80V150L880,160M960,150L1020,130 1060,120M340,200L380,170 390,230 380,285M390,240L470,290 540,230M380,285L500,305 530,300M230,280L360,300M240,310L330,285M860,150V190M450,100L520,120M440,160L520,170";

const DENSE = {
  north: "340,200 430,200 510,240 515,340 600,370 630,430 650,500 600,580 570,650 460,700 330,720 205,720 300,600 300,490 250,480 240,430 270,400 290,250",
  coast: "370,90 420,50 520,40 510,110 500,210 430,190 360,150",
  south: "205,0 450,0 400,90 330,180 300,240 235,240 220,310 180,310 60,205 90,130 150,110",
};

const ColombiaMap = () => (
  <svg viewBox="487 121 877 578" preserveAspectRatio="xMaxYMin slice" role="img" aria-label="Mapa">
    <defs>
      {Object.entries(DENSE).map(([id, pts]) => (
        <clipPath id={id} key={id}><polygon points={pts} /></clipPath>
      ))}
    </defs>
    <circle cx="914" cy="347" r="1" fill="#ffff9a" />
    <circle cx="1090" cy="174" r="1" fill="#f0e060" />
    <circle cx="1018" cy="379" r="1" fill="#f4f060" />
    <g transform="translate(980 120) scale(.33333)" fill="none" strokeLinejoin="round" strokeLinecap="round">
      <path d={coast(NORTH)} fill="#ffff33" />
      <path transform="translate(0 690)" d={coast(SOUTH)} fill="#ffff33" />
      <g stroke="#f2de26" strokeWidth="2.2">
        <path d={NORTH_FAINT} />
        <path clipPath="url(#coast)" d={mesh(350, 40, 530, 220, 30)} />
        <path clipPath="url(#north)" d={mesh(180, 180, 660, 720, 19)} />
        <g transform="translate(0 690)">
          <path d={SOUTH_FAINT} />
          <path clipPath="url(#south)" d={mesh(20, 0, 460, 320, 19)} />
        </g>
      </g>
      <g stroke="#000" strokeWidth="12">
        <path d={coast(NORTH)} />
        {NORTH_BORDERS.map((b) => <path key={b} d={coast(b)} />)}
        <path d="M761,600V785" />
        <g transform="translate(0 690)">
          <path d={coast(SOUTH)} />
          {SOUTH_BORDERS.map((b) => <path key={b} d={coast(b)} />)}
        </g>
      </g>
    </g>
  </svg>
);

/* ---------- data ---------- */

const MENUS: [string, string, string][] = [
  ["Pro", "y", "ecto"], ["", "E", "dición"], ["", "V", "er"], ["", "C", "apa"], ["Confi", "g", "uración"], ["Co", "m", "plementos"],
  ["Vect", "o", "rial"], ["", "R", "áster"], ["Base de ", "d", "atos"], ["", "W", "eb"], ["Pro", "c", "esos"], ["A", "y", "uda"],
];

// "|" is a grip, "v" a drop-down arrow, a leading "-" a disabled tool and "*" the pressed one.
const BAR_ONE = "new open save saveAs layout manager style | *hand pan zoomIn zoomOut -zoom1 zoomFull zoomSel zoomLayer zoomLast -zoomNext bookmark bookmarkNew bookmarks refresh | info -action -v select v selectForm v deselect table abacus gear sigma measure v tips note v".split(" ");
const BAR_TWO = "dataSrc geopackage vector quill memory | -pencils pencil -saveEdits -blob -vertex -v -modify -trash -cut -copy -paste -undo -redo | label diagram pinLabels -labelPin -labelShow -labelMove -labelRotate -labelEdit | metasearch | python grass | help |".split(" ");

type Node = { t: string; l?: number; i: string; e?: "closed" | "open"; menu?: boolean };
const NODES: Node[] = [
  { t: "Nueva carpeta", l: 5, i: "folder", e: "closed" },
  { t: "FOTOGRAMETRIA", l: 3, i: "folder", e: "closed" },
  { t: "GEODESIA ESPACIAL", l: 3, i: "folder", e: "closed" },
  { t: "GEOESTADISTICA", l: 3, i: "folder", e: "closed" },
  { t: "PERCEPCION REMOTA Y PDI", l: 3, i: "folder", e: "closed" },
  { t: "PROYECTO DE GEOMATICA APLICADO", l: 3, i: "folder", e: "closed" },
  { t: "SIG", l: 3, i: "folder", e: "closed" },
  { t: "Horarios Primer Semestre 2019-1.xlsx", l: 3, i: "sheet" },
  { t: "FONAFAOL", l: 2, i: "folder", e: "closed" },
  { t: "TRABAJOS", l: 2, i: "folder", e: "closed" },
  { t: "WUDownloadCache", l: 1, i: "folder", e: "closed" },
  { t: "E:\\", i: "folder", e: "closed" },
  { t: "GeoPackage", i: "pkg" },
  { t: "SpatiaLite", i: "feather" },
  { t: "PostGIS", i: "postgis", e: "closed" },
  { t: "MSSQL", i: "mssql", e: "closed" },
  { t: "Oracle", i: "oracle", e: "closed" },
  { t: "DB2", i: "db2", e: "closed" },
  { t: "WMS/WMTS", i: "wms", menu: true },
  { t: "XYZ Tiles", i: "wms", e: "open" },
  { t: "OpenStreetMap", l: 1, i: "osm" },
  { t: "WCS", i: "wcs" },
  { t: "WFS", i: "wfs" },
  { t: "OWS", i: "ows" },
  { t: "ArcGisMapServer", i: "arc" },
  { t: "ArcGisFeatureServer", i: "arcf" },
  { t: "GeoNode", i: "geonode" },
];

const Tools = ({ items }: { items: string[] }) => (
  <ToolBar role="toolbar">
    <Handle $first />
    {items.map((raw, i) => {
      const off = raw[0] === "-";
      const on = raw[0] === "*";
      const name = off || on ? raw.slice(1) : raw;
      if (name === "|") return <Handle key={i} />;
      if (name === "v") return <DropArrow key={i} disabled={off} aria-label="Más opciones" />;
      return <ToolButton key={i} disabled={off} $active={on} aria-label={name}><Svg>{IC[name]}</Svg></ToolButton>;
    })}
  </ToolBar>
);

const Spin = () => <Spinner><button aria-label="Subir" /><button aria-label="Bajar" /></Spinner>;

const TASKS: { n: string; r?: boolean; a?: boolean; d: React.ReactNode }[] = [
  { n: "Cortana", d: <circle cx="12" cy="12" r="6.500" stroke="#fff" strokeWidth="2" /> },
  { n: "Vista de tareas", d: <path d="M4 4.500v2h10v-2M4 9.500h10v6H4zM4 20v-2h10v2M18 4v3M18 11v9" stroke="#fff" strokeWidth="1.300" /> },
  { n: "Edge", r: true, d: <path d="M2 11C3 4 8 1 13 1.500c6 .5 10 5 9.500 12H9c0 6 8 6 12 3.500v4.500C15 24.500 4 24 3.500 15 3.500 10 8 7.500 11 7c-1 1-1.800 2-2 3.300h7C16 4 7 4.500 2 11z" fill="#0a84e0" /> },
  { n: "Explorador", r: true, d: <><path d="M1 3h8l2 2h12v15H1z" fill="#f0c251" /><path d="M1 7h22v14H1z" fill="#fbdb7b" /><path d="M5 21v-8h14v8h-3v-4H8v4z" fill="#4397dd" /></> },
  { n: "Store", d: <><path d="M8 8V4c0-4 8-4 8 0v4" stroke="#fff" strokeWidth="1.300" /><path d="M1 6h22v15.500c0 1-1 1.500-2 1.500H3c-1 0-2-.5-2-1.500z" fill="#fff" /><path d="M7 9h5v5H7z" fill="#e2502c" /><path d="M13 9h5v5h-5z" fill="#7fb72f" /><path d="M7 15h5v5H7z" fill="#2499dc" /><path d="M13 15h5v5h-5z" fill="#f8b91e" /></> },
  { n: "Correo", d: <><path d="M0 9l12-7 12 7v12H0z" fill="#fff" /><path d="M1 8.500h22L10 12l3 3.500z" fill="#20323d" /></> },
  { n: "Timón", d: <><circle cx="12" cy="12" r="11.500" fill="#f28a1c" /><circle cx="12" cy="12" r="5.500" stroke="#fff" strokeWidth="1.800" /><circle cx="12" cy="12" r="2" fill="#fff" /><path d="M12 4v16M4 12h16M6.300 6.300l11.400 11.400M17.700 6.300L6.300 17.700" stroke="#fff" strokeWidth="1.100" /></> },
  { n: "Chrome", r: true, d: <><circle cx="12" cy="12" r="11" fill="#e5e5e5" /><path d="M12 12L2.500 6.500a11 11 0 0 1 19 0z" fill="#df4a3c" /><path d="M12 12L2.500 6.500A11 11 0 0 0 11 23l5-8z" fill="#2ea44f" /><path d="M12 7h10a11 11 0 0 1-11 16l5-9z" fill="#fbcf2f" /><circle cx="12" cy="12" r="5" fill="#fff" /><circle cx="12" cy="12" r="4" fill="#3f7de0" /></> },
  { n: "ArcMap", r: true, d: <><circle cx="11" cy="11" r="10.500" fill="#1768a6" /><path d="M2 6C6-1 16-1 20 5l-2 12-8 4-7-5z" fill="#5cb85b" opacity=".75" /><circle cx="11" cy="9.500" r="5.500" fill="#bfe4f2" stroke="#e8eef2" strokeWidth="1.500" /><path d="M15 13.500l7 8" stroke="#c99b60" strokeWidth="3" /></> },
  { n: "Word", r: true, d: <><path d="M12 3h11v18H12z" fill="#fff" /><path d="M13 6h8M13 9h8M13 12h8M13 15h8M13 18h8" stroke="#2b579a" /><path d="M1 3l13-2.500v23L1 21z" fill="#2b579a" /><text x="2.500" y="16" fontSize="10" fontWeight="700" fontFamily="Open Sans, sans-serif" fill="#fff">W</text></> },
  { n: "QGIS", r: true, a: true, d: <QLogo /> },
  { n: "Recortes", r: true, d: <><ellipse cx="10" cy="12" rx="10" ry="6" fill="#9aa0a6" transform="rotate(-12 11 11)" /><ellipse cx="13" cy="7.500" rx="10" ry="5.500" fill="#f5f5f5" stroke="#cf3b37" strokeWidth="1.500" transform="rotate(-12 12 8)" /><path d="M12 8l7 9M20 9l-6 9" stroke="#777" strokeWidth="1.400" /><circle cx="14" cy="20" r="2.300" stroke="#1d87d0" strokeWidth="1.800" /><circle cx="20" cy="18" r="2.300" stroke="#1d87d0" strokeWidth="1.800" /></> },
];

export default function App() {
  return (
    <Window>
      <GlobalStyle />
      <TitleBar>
        <Svg size={16}><QLogo /></Svg>
        <h1>*Proyecto sin título - QGIS</h1>
        <WindowButton aria-label="Minimizar"><Svg size={10} box={10}><path d="M0 5.500h10" stroke="#000" /></Svg></WindowButton>
        <WindowButton aria-label="Restaurar"><Svg size={10} box={10}><path d="M.5 2.500h7v7h-7zM2.500 2.500v-2h7v7h-2" stroke="#000" /></Svg></WindowButton>
        <WindowButton aria-label="Cerrar"><Svg size={10} box={10}><path d="M0 0l10 10M10 0L0 10" stroke="#000" /></Svg></WindowButton>
      </TitleBar>
      <MenuBar>
        {MENUS.map(([a, u, b]) => <MenuItem key={a + u + b}>{a}<u>{u}</u>{b}</MenuItem>)}
      </MenuBar>
      <Tools items={BAR_ONE} />
      <Tools items={BAR_TWO} />

      <Workspace>
        <Dock>
          <DockTitle>
            <h2>Navegador</h2>
            <DockButton aria-label="Desacoplar"><Svg size={12} box={12}><path d="M2.500.5h7l2 2v7l-2 2h-7l-2-2v-7zM3 5.500h4v3.500H3zM5 5V3h4v4H7.500" stroke="#666" /></Svg></DockButton>
            <DockButton aria-label="Cerrar panel"><Svg size={12} box={12}><path d="M2.500.5h7l2 2v7l-2 2h-7l-2-2v-7z" stroke="#666" /><path d="M3.500 3.500l5 5M8.500 3.500l-5 5" stroke="#444" strokeWidth="2" /></Svg></DockButton>
          </DockTitle>
          <DockTools>
            {["addLayer", "refresh", "filter", "collapse", "infoOnly"].map((n) => (
              <DockTool key={n} aria-label={n}><Svg size={15}>{IC[n]}</Svg></DockTool>
            ))}
          </DockTools>
          <TreeFrame>
            <Tree>
              {NODES.map((n) => (
                <TreeRow key={n.t} $level={n.l ?? 0} $selected={n.menu}>
                  <Expander $state={n.e} />
                  <Svg size={16}>{IC[n.i]}</Svg>
                  <RowText>{n.t}</RowText>
                  {n.menu && <ContextMenu><button>Conexión nueva...</button></ContextMenu>}
                </TreeRow>
              ))}
            </Tree>
            <ScrollBar>
              <ScrollStep aria-label="Arriba" />
              <ScrollTrack />
              <ScrollThumb />
              <ScrollStep $down aria-label="Abajo" />
            </ScrollBar>
          </TreeFrame>
          <Tabs><Tab $active>Navegador</Tab><Tab>Capas</Tab></Tabs>
        </Dock>
        <Splitter />
        <MapCanvas><ColombiaMap /></MapCanvas>
      </Workspace>

      <StatusBar>
        <Locator>
          <Svg size={14}><circle cx="9.500" cy="9.500" r="7.500" stroke="#888" strokeWidth="2" /><path d="M15 15l8 8" stroke="#888" strokeWidth="2.500" /></Svg>
          <input placeholder="Escriba para localizar (Ctrl+K)" aria-label="Localizar" />
        </Locator>
        <Message>Alterna el estado de edición de la capa activa</Message>
        <StatusLabel $w={63} htmlFor="coord">Coordenada</StatusLabel>
        <Field $w={96} $gap={5} $pad={3}><input id="coord" defaultValue="-1275365,886998" /></Field>
        <IconButton $w={28} aria-label="Extensión">
          <Svg size={16}><path d="M3 3l6 2 3 6 7 3-2 7-7 1-7-7zM13 3l8 8M16 2l-3 7 7-3" stroke="#333" strokeWidth="1.800" /><path d="M5 6l12 12M5 12l9 9M10 5l1 11" stroke="#555" strokeWidth="1.500" /></Svg>
        </IconButton>
        <StatusLabel $w={34} htmlFor="scale">Escala</StatusLabel>
        <Field $w={81} $gap={11} $pad={0}><input id="scale" defaultValue="1:13914873" /><ComboButton aria-label="Escalas" /></Field>
        <IconButton $w={20} aria-label="Bloquear escala">
          <Svg size={15}><path d="M6.500 12V7c0-7 11-7 11 0v5" stroke="#666" strokeWidth="2.500" /><rect x="2" y="10" width="20" height="13" rx="2" fill="#5e5e5e" /></Svg>
        </IconButton>
        <StatusLabel $w={64} htmlFor="mag">Amplificador</StatusLabel>
        <Field $w={88}><input id="mag" defaultValue="100%" /><Spin /></Field>
        <StatusLabel $w={52} htmlFor="rot">Rotación</StatusLabel>
        <Field $w={84} $gap={6}><input id="rot" defaultValue="0.0 °" /><Spin /></Field>
        <Check><input type="checkbox" defaultChecked />Representar</Check>
        <Crs>
          <Svg size={14}><circle cx="12" cy="12" r="11" fill="#888" /><path d="M1 12h22M3 6.500h18M3 17.500h18M12 1v22M12 1C5 7 5 17 12 23M12 1c7 6 7 16 0 22" stroke="#eee" strokeWidth="1.200" /></Svg>
          USER:100000
        </Crs>
        <IconButton $w={16} aria-label="Mensajes">
          <Svg size={16}><path d="M12 3c7 0 11.500 3.500 11.500 8.500S19 20 14 20c-1 2-4 3-7 3 1.500-1 2-2 2-3.500C4 19 .5 16 .5 11.500.5 6.500 5 3 12 3z" fill="#5e5e5e" /><circle cx="7" cy="11" r="1.500" fill="#fff" /><circle cx="12" cy="11" r="1.500" fill="#fff" /><circle cx="17" cy="11" r="1.500" fill="#fff" /></Svg>
        </IconButton>
      </StatusBar>

      <TaskBar>
        <StartButton aria-label="Inicio"><Svg size={16} box={16}><path d="M0 2.300l6.500-1v6.200H0zM7.300 1.200L16 0v7.500H7.300zM0 8.300h6.500v6.300L0 13.700zM7.300 8.300H16V16l-8.700-1.200z" fill="#fff" /></Svg></StartButton>
        <TaskSearch>
          <Svg size={18}><circle cx="14.500" cy="9" r="7.500" stroke="#222" strokeWidth="1.700" /><path d="M9 14.500L1.500 22.500" stroke="#222" strokeWidth="1.700" /></Svg>
          <input placeholder="Escribe aquí para buscar" aria-label="Buscar" />
        </TaskSearch>
        {TASKS.map((t) => (
          <TaskButton key={t.n} $running={t.r} $active={t.a} aria-label={t.n}><Svg size={24}>{t.d}</Svg></TaskButton>
        ))}
        <Tray>
          <TrayButton aria-label="Iconos ocultos"><Svg size={16}><path d="M3 16l9-9 9 9" stroke="#fff" strokeWidth="1.800" /></Svg></TrayButton>
          <TrayButton aria-label="OneDrive"><Svg size={16}><path d="M5 19c-6 0-5-7-.5-7C5 6 12 4 15 9c5-1 8 2 7 4 3 2 2 6-2 6z" fill="#e2e4e8" /></Svg></TrayButton>
          <TrayButton aria-label="Sincronización"><Svg size={18}><path d="M2 4l20-2v18H2z" stroke="#fff" strokeWidth="1.500" /><path d="M8 10c2-4 6-3 7 0M15 6v4h-4M16 13c-2 4-6 3-7 0M9 17v-4h4" stroke="#fff" strokeWidth="1.500" /><circle cx="19" cy="19" r="5" fill="#f9a11b" /></Svg></TrayButton>
          <TrayButton aria-label="Batería"><Svg size={18}><path d="M7 8h14v10H7z" stroke="#fff" strokeWidth="1.500" /><path d="M9 10h10v6H9z" fill="#fff" /><path d="M22.500 11v4M1 5h5v3H1zM2 2v3M5 2v3M3.500 8v5H7" stroke="#fff" strokeWidth="1.300" /></Svg></TrayButton>
          <TrayButton aria-label="Red"><Svg size={18}><path d="M8 5h15v12H8M12 21h8M16 17v4M1 3h6v5H1zM4 8v13" stroke="#fff" strokeWidth="1.500" /></Svg></TrayButton>
          <TrayButton aria-label="Volumen"><Svg size={17}><path d="M2 9h4l6-5v16l-6-5H2z" stroke="#fff" strokeWidth="1.500" /><path d="M15 9c1.500 2 1.500 4 0 6" stroke="#fff" strokeWidth="1.500" /><path d="M18 7c2.500 3 2.500 7 0 10M21 4c4 5 4 11 0 16" stroke="#8b93a0" strokeWidth="1.500" /></Svg></TrayButton>
          <Language>ESP</Language>
          <Clock>5:36<br />12/12/2019</Clock>
          <Notices aria-label="Notificaciones"><Svg size={26} box={26}><path d="M2 4h17v13H8l-4 4v-4H2z" fill="#fff" /><path d="M5 7.500h11M5 10.500h11M5 13.500h6" stroke="#1b2641" /><circle cx="17.500" cy="17.500" r="7.500" fill="#2e3443" stroke="#8b909b" /><text x="14.500" y="21.500" fontSize="11" fontFamily="Open Sans, sans-serif" fill="#fff">2</text></Svg></Notices>
          <ShowDesktop aria-label="Mostrar escritorio" />
        </Tray>
      </TaskBar>
    </Window>
  );
}
